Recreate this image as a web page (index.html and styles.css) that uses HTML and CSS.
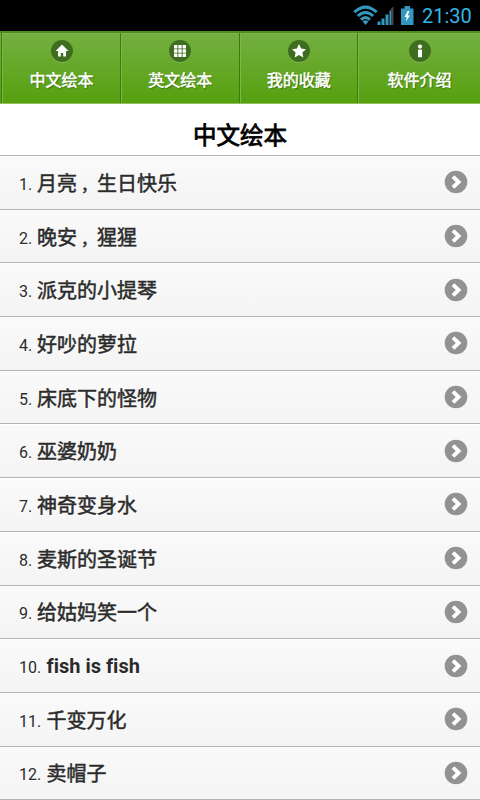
FILE: index.html
```html
<!DOCTYPE html>
<html lang="zh-CN">
<head>
<meta charset="utf-8">
<title>中文绘本</title>
<link rel="stylesheet" href="styles.css">
</head>
<body>
<svg class="defs" width="0" height="0">
  <symbol id="arrow" viewBox="0 0 24 24"><circle cx="12" cy="12" r="11.3" fill="#929292"/><path d="M9 6.6 14.6 12 9 17.4" fill="none" stroke="#fff" stroke-width="3.9"/></symbol>
</svg>
<div class="status">
  <svg class="signals" width="62" height="22" viewBox="0 0 62 22">
    <g fill="none" stroke="#3398be" stroke-width="3">
      <path d="M1.3 7.2Q12.500-3 23.700 7.2"/>
      <path d="M4.800 11Q12.500 4 20.200 11"/>
      <path d="M8 14.600Q12.500 10.500 17 14.600"/>
    </g>
    <path d="M9.500 16.500Q12.500 14 15.500 16.500L12.500 20Z" fill="#3398be"/>
    <path d="M24.500 20v-3.500h3V20zM28.500 20v-6.500h3V20zM32.500 20V9.500h3V20z" fill="#3398be"/>
    <path d="M36.500 20V5.500h1.500V20z" fill="#3398be"/><path d="M38 20V3.500l2.500-2V20z" fill="#454545"/>
    <path d="M48 3.500h3.500V1h5.500v2.500h3.500V20H48z" fill="#3398be"/>
    <path d="m54.500 6-3 6h2.300l-1 4.500 4.200-6h-2.400L56.500 6z" fill="#fff"/>
  </svg>
  <span class="clock">21:30</span>
</div>
<nav class="nav">
  <a class="tab">
    <svg class="icon" viewBox="0 0 24 24"><circle cx="12" cy="12.700" r="11" fill="#87ba63"/><circle cx="12" cy="12" r="11" fill="#3f6d20"/><path d="M12 5.500 5.500 12H8v5.500h2.800V14h2.400v3.500H16V12h2.500z" fill="#fff"/></svg>
    <span>中文绘本</span>
  </a>
  <a class="tab">
    <svg class="icon" viewBox="0 0 24 24"><circle cx="12" cy="12.700" r="11" fill="#87ba63"/><circle cx="12" cy="12" r="11" fill="#3f6d20"/><path d="M6 6h3.400v3.400H6zM10.300 6h3.400v3.400h-3.400zM14.600 6H18v3.400h-3.400zM6 10.300h3.400v3.400H6zM10.300 10.300h3.400v3.400h-3.400zM14.600 10.300H18v3.400h-3.400zM6 14.600h3.400V18H6zM10.300 14.600h3.400V18h-3.400zM14.600 14.600H18V18h-3.400z" fill="#fff"/></svg>
    <span>英文绘本</span>
  </a>
  <a class="tab">
    <svg class="icon" viewBox="0 0 24 24"><circle cx="12" cy="12.700" r="11" fill="#87ba63"/><circle cx="12" cy="12" r="11" fill="#3f6d20"/><path d="m12 5 2.100 4.600 4.900.6-3.600 3.400.9 4.900-4.300-2.400-4.300 2.400.9-4.900L5 10.200l4.900-.6z" fill="#fff"/></svg>
    <span>我的收藏</span>
  </a>
  <a class="tab">
    <svg class="icon" viewBox="0 0 24 24"><circle cx="12" cy="12.700" r="11" fill="#87ba63"/><circle cx="12" cy="12" r="11" fill="#3f6d20"/><circle cx="12" cy="7.600" r="2.100" fill="#fff"/><path d="M10 10.600h4v7.600h-4z" fill="#fff"/></svg>
    <span>软件介绍</span>
  </a>
</nav>
<h1 class="title">中文绘本</h1>
<ol class="list">
  <li class="row"><span class="num">1.</span><span class="name">月亮<span class="comma">，</span>生日快乐</span><svg class="arrow"><use href="#arrow"/></svg></li>
  <li class="row"><span class="num">2.</span><span class="name">晚安<span class="comma">，</span>猩猩</span><svg class="arrow"><use href="#arrow"/></svg></li>
  <li class="row"><span class="num">3.</span><span class="name">派克的小提琴</span><svg class="arrow"><use href="#arrow"/></svg></li>
  <li class="row"><span class="num">4.</span><span class="name">好吵的萝拉</span><svg class="arrow"><use href="#arrow"/></svg></li>
  <li class="row"><span class="num">5.</span><span class="name">床底下的怪物</span><svg class="arrow"><use href="#arrow"/></svg></li>
  <li class="row"><span class="num">6.</span><span class="name">巫婆奶奶</span><svg class="arrow"><use href="#arrow"/></svg></li>
  <li class="row"><span class="num">7.</span><span class="name">神奇变身水</span><svg class="arrow"><use href="#arrow"/></svg></li>
  <li class="row"><span class="num">8.</span><span class="name">麦斯的圣诞节</span><svg class="arrow"><use href="#arrow"/></svg></li>
  <li class="row"><span class="num">9.</span><span class="name">给姑妈笑一个</span><svg class="arrow"><use href="#arrow"/></svg></li>
  <li class="row"><span class="num wide">10.</span><span class="name latin">fish is fish</span><svg class="arrow"><use href="#arrow"/></svg></li>
  <li class="row"><span class="num wide">11.</span><span class="name">千变万化</span><svg class="arrow"><use href="#arrow"/></svg></li>
  <li class="row"><span class="num wide">12.</span><span class="name">卖帽子</span><svg class="arrow"><use href="#arrow"/></svg></li>
</ol>
</body>
</html>
```
FILE: styles.css
```css
* { box-sizing: border-box; }
html, body { height: 800px; overflow: hidden; }
body {
  margin: 0;
  display: flex;
  flex-direction: column;
  background: #fff;
  color: #2b2b2b;
  font-family: Roboto, "Noto Sans CJK SC", sans-serif;
}
.defs { position: absolute; }
.status {
  flex: none;
  height: 31px;
  padding: 0 8px 0 0;
  background: #000;
  display: flex;
  justify-content: flex-end;
  align-items: flex-start;
}
.signals { margin: 5px 7px 0 0; }
.clock {
  width: 50px;
  color: #33b5e5;
  font-size: 20px;
  line-height: 33px;
  white-space: nowrap;
}
.nav {
  flex: none;
  height: 73px;
  padding-left: 1px;
  display: grid;
  grid-template-columns: 119px 118.5px 118.5px 1fr;
  background: linear-gradient(#74b042, #56a00e);
  border-top: 2px solid #4d8a1f;
  border-bottom: 1px solid #8fc05c;
}
.tab {
  border-left: 1px solid #3c7a0c;
  box-shadow: inset 1px 1px 0 #7cb94b;
  display: flex;
  flex-direction: column;
  align-items: center;
  padding: 6px 0 0 1px;
  color: #fff;
  font-size: 16px;
  line-height: 24px;
  -webkit-text-stroke: 0.5px #fff;
  text-shadow: 1px 1px 1px #2f6408;
}
.icon { width: 24px; height: 24px; margin-bottom: 6px; }
.title {
  flex: none;
  height: 51px;
  margin: 0;
  padding-top: 7px;
  text-align: center;
  font-size: 23.5px;
  line-height: 50px;
  font-weight: 400;
  color: #000;
  -webkit-text-stroke: 0.8px #000;
}
.list {
  flex: none;
  margin: 0;
  padding: 0;
  list-style: none;
  border-bottom: 1px solid #b3b3b3;
}
.row {
  height: 53.7px;
  padding: 0 12px 0 19px;
  display: flex;
  align-items: center;
  border-top: 1px solid #b3b3b3;
  box-shadow: inset 0 1px 0 #fff;
  background: linear-gradient(#fafafa, #f4f4f4);
  text-shadow: 0 1px 0 #fff;
}
.num { width: 18px; font-size: 16px; padding-top: 4px; white-space: nowrap; }
.num.wide { width: 27.5px; }
.name {
  flex: 1;
  padding-top: 3px;
  font-size: 20px;
  line-height: 30px;
  -webkit-text-stroke: 0.5px #2b2b2b;
}
.comma {
  display: inline-block;
  width: 20px;
  padding-left: 4px;
  font-size: 16px;
  line-height: 20px;
}
.latin {
  padding-top: 0;
  font-weight: 700;
  font-variant-ligatures: none;
  -webkit-text-stroke: 0;
}
.arrow { width: 24px; height: 24px; }
```
